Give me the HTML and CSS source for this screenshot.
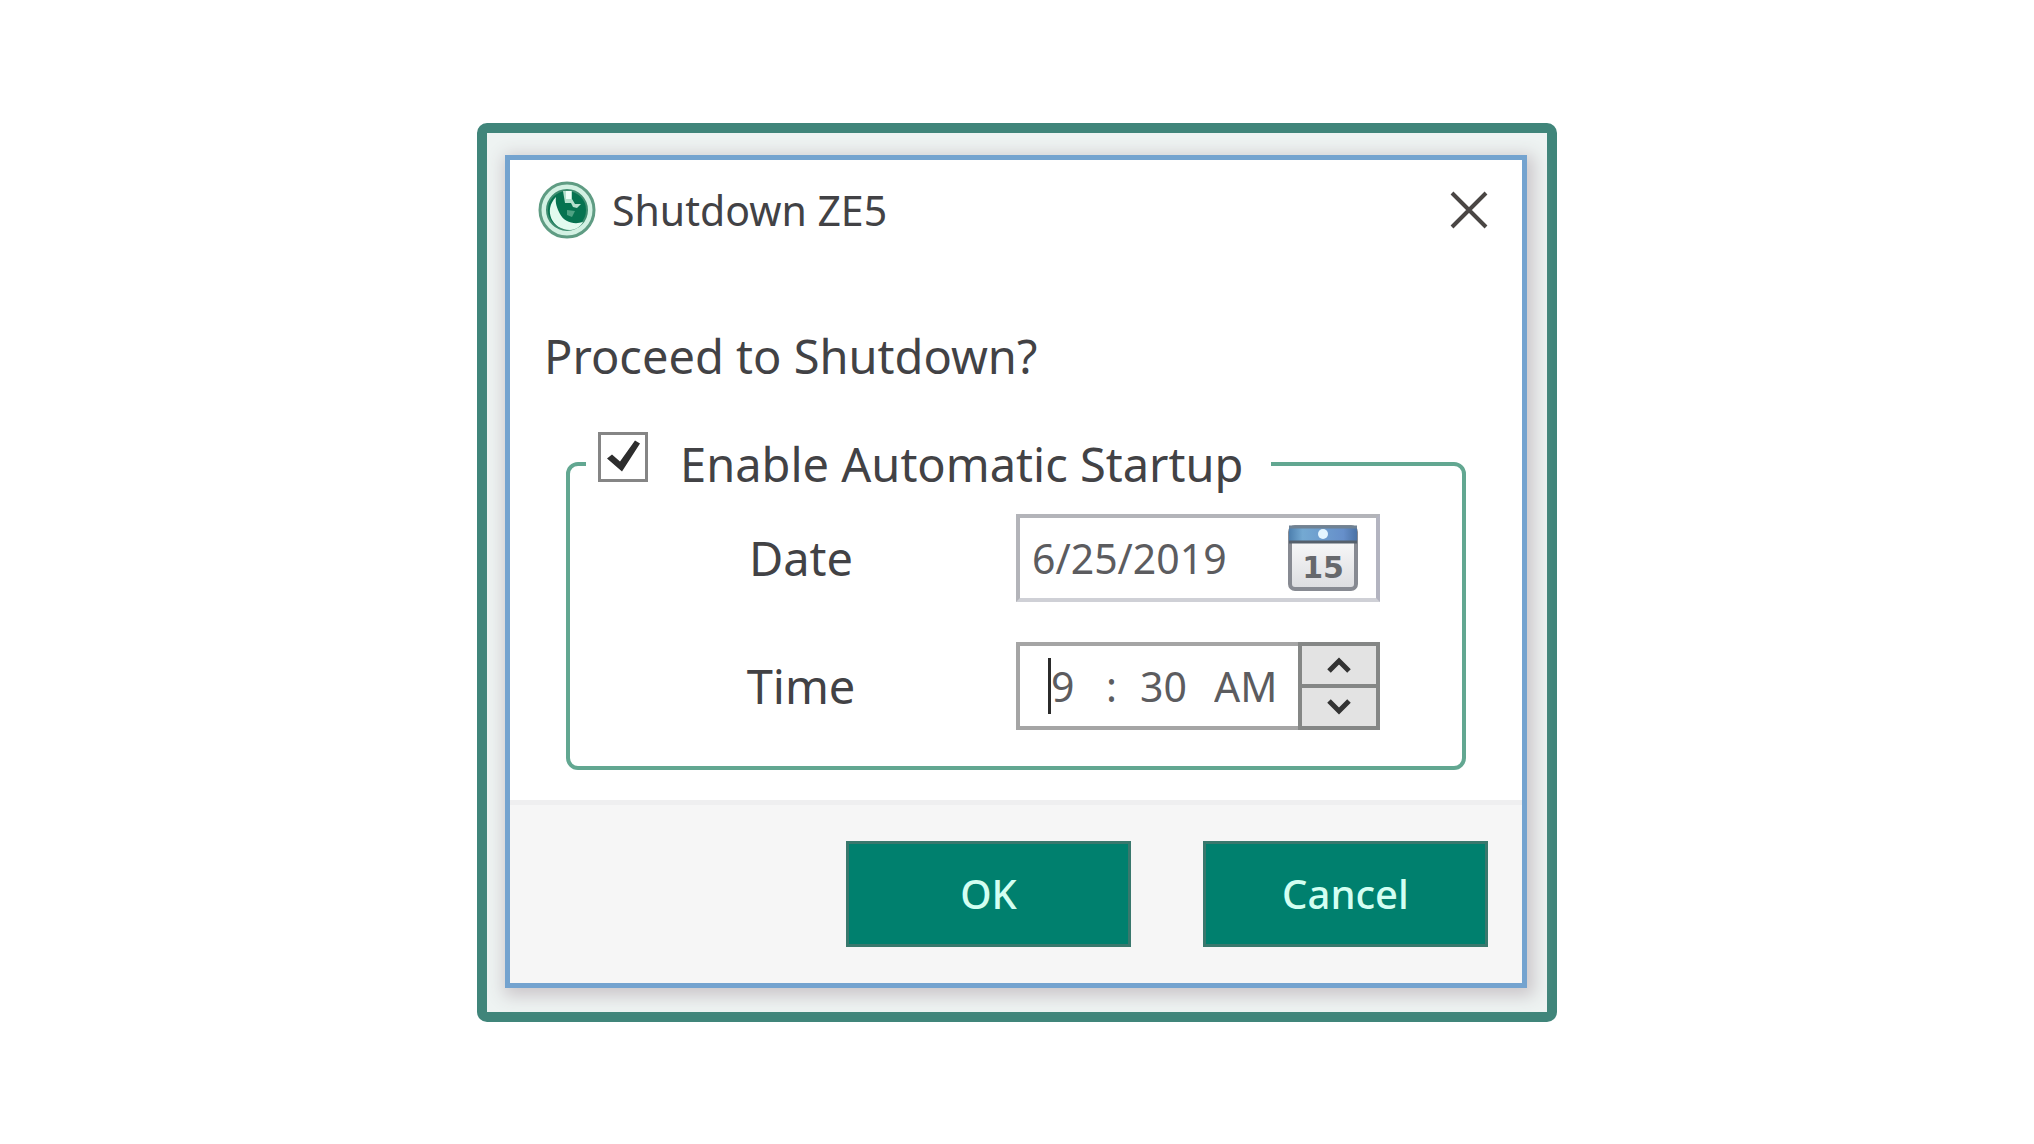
FILE: index.html
```html
<!DOCTYPE html>
<html lang="en">
<head>
  <meta charset="UTF-8">
  <meta name="viewport" content="width=device-width, initial-scale=1.0">
  <title>Shutdown ZE5</title>
  <link rel="stylesheet" href="styles.css">
</head>
<body>
  <main class="frame">
    <form class="dialog">
      <header class="titlebar">
        <svg class="logo" viewBox="0 0 58 58" aria-hidden="true">
          <circle cx="29" cy="29" r="27" fill="#d3f1e3" stroke="#5f9c83" stroke-width="3"/>
          <circle cx="29" cy="29" r="20" fill="#067350" stroke="#3f8d70" stroke-width="2"/>
          <path d="M18 16C5 29 14 49 32 49C38 49 43 45 45 41C36 44 26 41 22 33C19 27 17 22 18 16Z" fill="#e2fbef"/>
          <path d="M25 10H34V18L37 23H43L39 27L35 26L33 22H27Z" fill="#b5e0cd"/>
          <path d="M28 10H33V18H28Z" fill="#effff8"/>
          <path d="M29 29L37 30L34 36L29 34Z" fill="#4fa283"/>
        </svg>
        <h1>Shutdown ZE5</h1>
        <button type="button" class="close" aria-label="Close">
          <svg viewBox="0 0 38 38" aria-hidden="true">
            <path d="M2 2L36 36M36 2L2 36" fill="none" stroke="#4a4644" stroke-width="4"/>
          </svg>
        </button>
      </header>

      <div class="content">
        <p class="question">Proceed to Shutdown?</p>

        <fieldset class="startup">
          <legend>
            <input type="checkbox" id="auto-startup" checked>
            <label for="auto-startup">Enable Automatic Startup</label>
          </legend>

          <div class="fields">
            <label for="date">Date</label>
            <div class="field date-field">
              <input type="text" id="date" value="6/25/2019">
              <button type="button" class="calendar" aria-label="Pick a date">
                <svg viewBox="0 0 70 66" aria-hidden="true">
                  <defs>
                    <linearGradient id="page" x1="0" y1="0" x2="0" y2="1">
                      <stop offset="0" stop-color="#ffffff"/>
                      <stop offset="1" stop-color="#dcdde0"/>
                    </linearGradient>
                    <linearGradient id="band" x1="0" y1="0" x2="1" y2="0">
                      <stop offset="0" stop-color="#4d7fae"/>
                      <stop offset="0.2" stop-color="#74a9d2"/>
                      <stop offset="0.8" stop-color="#668fca"/>
                      <stop offset="1" stop-color="#4b72a5"/>
                    </linearGradient>
                  </defs>
                  <rect x="2" y="2" width="66" height="62" rx="5" fill="url(#page)" stroke="#878a92" stroke-width="4"/>
                  <rect x="1" y="1" width="68" height="16" fill="url(#band)"/>
                  <path d="M1 2H69" stroke="#6f8294" stroke-width="3"/>
                  <path d="M1 17H69" stroke="#55606c" stroke-width="3"/>
                  <circle cx="35" cy="9" r="5" fill="#e4f5ff"/>
                  <text x="35" y="53" text-anchor="middle" class="calendar-day">15</text>
                </svg>
              </button>
            </div>

            <label for="hour">Time</label>
            <div class="field time-field">
              <div class="time-parts">
                <input type="text" class="hour" id="hour" value="9">
                <span class="colon">:</span>
                <input type="text" class="minute" value="30" aria-label="Minutes">
                <input type="text" class="period" value="AM" aria-label="AM or PM">
              </div>
              <div class="spinner">
                <button type="button" aria-label="Increase">
                  <svg viewBox="0 0 24 16" aria-hidden="true"><path d="M2 14L12 4L22 14" fill="none" stroke="#333" stroke-width="5"/></svg>
                </button>
                <button type="button" aria-label="Decrease">
                  <svg viewBox="0 0 24 16" aria-hidden="true"><path d="M2 2L12 12L22 2" fill="none" stroke="#333" stroke-width="5"/></svg>
                </button>
              </div>
            </div>
          </div>
        </fieldset>
      </div>

      <footer class="actions">
        <button type="submit">OK</button>
        <button type="button">Cancel</button>
      </footer>
    </form>
  </main>
</body>
</html>
```
FILE: styles.css
```css
* {
  box-sizing: border-box;
}
body {
  margin: 0;
  min-height: 100vh;
  display: flex;
  justify-content: center;
  align-items: center;
  background: #fff;
  color: #424245;
  font-family: "Noto Sans", "Open Sans", sans-serif;
  font-size: 41px;
}
button,
input {
  font: inherit;
  color: inherit;
  margin: 0;
  padding: 0;
}
svg {
  display: block;
}

/* Outer frame */
.frame {
  width: 90%;
  max-width: 1080px;
  padding: 22px 20px 24px 18px;
  border: 10px solid #40857a;
  border-radius: 10px;
  background: #eef3f2;
}
.dialog {
  border: 5px solid #74a3cf;
  background: #fff;
  box-shadow: 3px 4px 16px 4px #cbc6ca;
}

/* Title bar */
.titlebar {
  display: flex;
  align-items: center;
  gap: 16px;
  height: 100px;
  padding: 0 34px 0 28px;
}
.logo {
  width: 58px;
  height: 58px;
}
.titlebar h1 {
  flex: 1;
  margin: 0;
  font-size: 41px;
  font-weight: 400;
}
.close {
  border: none;
  background: none;
}
.close svg {
  width: 38px;
  height: 38px;
}

/* Content */
.content {
  padding: 64px 56px 30px;
  font-size: 47px;
}
.question {
  margin: 0 0 44px -22px;
  line-height: 64px;
}
.startup {
  min-width: 0;
  margin: 0;
  padding: 18px 82px 36px 16px;
  border: 4px solid #62a791;
  border-radius: 12px;
}
.startup legend {
  display: flex;
  align-items: flex-start;
  gap: 32px;
  padding: 0 28px 0 12px;
  line-height: 64px;
}
.startup input[type="checkbox"] {
  appearance: none;
  width: 50px;
  height: 50px;
  border: 3px solid #858585;
  background: #fff;
}
.startup input[type="checkbox"]:checked::before {
  content: "";
  display: block;
  height: 44px;
  background: #2d2d2d;
  clip-path: polygon(6px 24px, 11px 20px, 19px 27px, 34px 6px, 39px 9px, 21px 37px);
}
.fields {
  display: grid;
  grid-template-columns: 1fr 364px;
  gap: 40px 0;
  align-items: center;
}
.fields > label {
  text-align: center;
}
.field {
  display: flex;
  height: 88px;
  border: 4px solid #a5a5a5;
  background: #fff;
  color: #5c5c5f;
  font-size: 41px;
}
.field input {
  min-width: 0;
  border: none;
  outline: none;
  background: none;
}
.date-field {
  align-items: center;
  justify-content: space-between;
  padding: 0 18px 0 12px;
  border-color: #b3b4b9 #b3b4c0 #cfd0d6 #b3b4b9;
}
.date-field input {
  flex: 1;
}
.calendar {
  border: none;
  background: none;
}
.calendar svg {
  width: 70px;
  height: 66px;
}
.calendar-day {
  font-family: "DejaVu Sans", sans-serif;
  font-size: 30px;
  font-weight: 700;
  fill: #66686c;
}
.time-parts {
  flex: 1;
  min-width: 0;
  display: flex;
  align-items: center;
  padding-left: 28px;
}
.time-parts .hour {
  width: 58px;
  height: 56px;
  border-left: 3px solid #2b2b2b;
}
.time-parts .colon {
  width: 34px;
}
.time-parts .minute {
  width: 74px;
}
.time-parts .period {
  flex: 1;
}
.spinner {
  display: flex;
  flex-direction: column;
  flex: 0 0 82px;
  gap: 4px;
  margin: -4px;
  padding: 4px;
  background: #858786;
}
.spinner button {
  flex: 1;
  display: flex;
  justify-content: center;
  align-items: center;
  border: none;
  background: #e3e3e3;
}
.spinner svg {
  width: 24px;
  height: 16px;
}

/* Footer buttons */
.actions {
  display: flex;
  justify-content: flex-end;
  gap: 72px;
  padding: 36px 34px 36px 36px;
  border-top: 5px solid #efeff0;
  background: #f6f6f6;
}
.actions button {
  width: 285px;
  height: 106px;
  border: 3px solid #39786d;
  background: #00806e;
  color: #d3fff2;
  font-size: 40px;
  font-weight: 500;
}
```
